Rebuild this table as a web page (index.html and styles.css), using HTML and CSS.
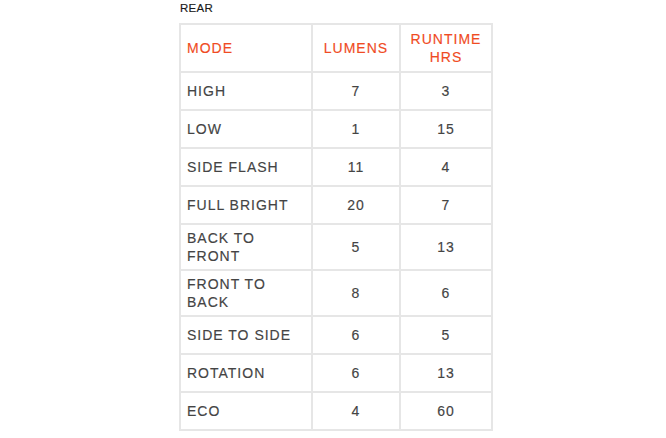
FILE: index.html
```html
<!DOCTYPE html>
<html>
<head>
<meta charset="utf-8">
<link rel="stylesheet" href="styles.css">
</head>
<body>
<div class="wrap">
  <div class="caption">REAR</div>
  <table class="modes">
    <thead>
      <tr class="head"><th class="c-mode">MODE</th><th class="c-lum">LUMENS</th><th class="c-run">RUNTIME<br>HRS</th></tr>
    </thead>
    <tbody>
      <tr><td class="c-mode">HIGH</td><td class="c-lum">7</td><td class="c-run">3</td></tr>
      <tr><td class="c-mode">LOW</td><td class="c-lum">1</td><td class="c-run">15</td></tr>
      <tr><td class="c-mode">SIDE FLASH</td><td class="c-lum">11</td><td class="c-run">4</td></tr>
      <tr><td class="c-mode">FULL BRIGHT</td><td class="c-lum">20</td><td class="c-run">7</td></tr>
      <tr><td class="c-mode">BACK TO<br>FRONT</td><td class="c-lum">5</td><td class="c-run">13</td></tr>
      <tr><td class="c-mode">FRONT TO<br>BACK</td><td class="c-lum">8</td><td class="c-run">6</td></tr>
      <tr><td class="c-mode">SIDE TO SIDE</td><td class="c-lum">6</td><td class="c-run">5</td></tr>
      <tr><td class="c-mode">ROTATION</td><td class="c-lum">6</td><td class="c-run">13</td></tr>
      <tr><td class="c-mode">ECO</td><td class="c-lum">4</td><td class="c-run">60</td></tr>
    </tbody>
  </table>
</div>
</body>
</html>
```
FILE: styles.css
```css
html, body {
  margin: 0;
  padding: 0;
  background: #ffffff;
}
body {
  font-family: "Liberation Sans", Arial, sans-serif;
}
.wrap {
  padding: 2px 0 0 179px;
}
.caption {
  font-size: 11.5px;
  line-height: 13px;
  letter-spacing: 0.3px;
  color: #1a1a1a;
  -webkit-text-stroke: 0.15px #1a1a1a;
  padding-left: 1px;
  margin-bottom: 8px;
}
.modes {
  border-collapse: collapse;
  width: 314px;
  table-layout: fixed;
}
.modes th, .modes td {
  border: 2px solid #e6e6e6;
  font-size: 14px;
  line-height: 18px;
  letter-spacing: 1px;
  font-weight: normal;
  padding: 4px 6px;
  vertical-align: middle;
  color: #444;
  -webkit-text-stroke: 0.15px #444;
}
.modes tr { height: 38px; }
.modes tr.head { height: 48px; }
.modes th {
  color: #f04b23;
  -webkit-text-stroke: 0.15px #f04b23;
}
.c-mode { width: 118px; text-align: left; padding-left: 7px; }
.c-lum { width: 74px; text-align: center; }
.c-run { text-align: center; }
```
